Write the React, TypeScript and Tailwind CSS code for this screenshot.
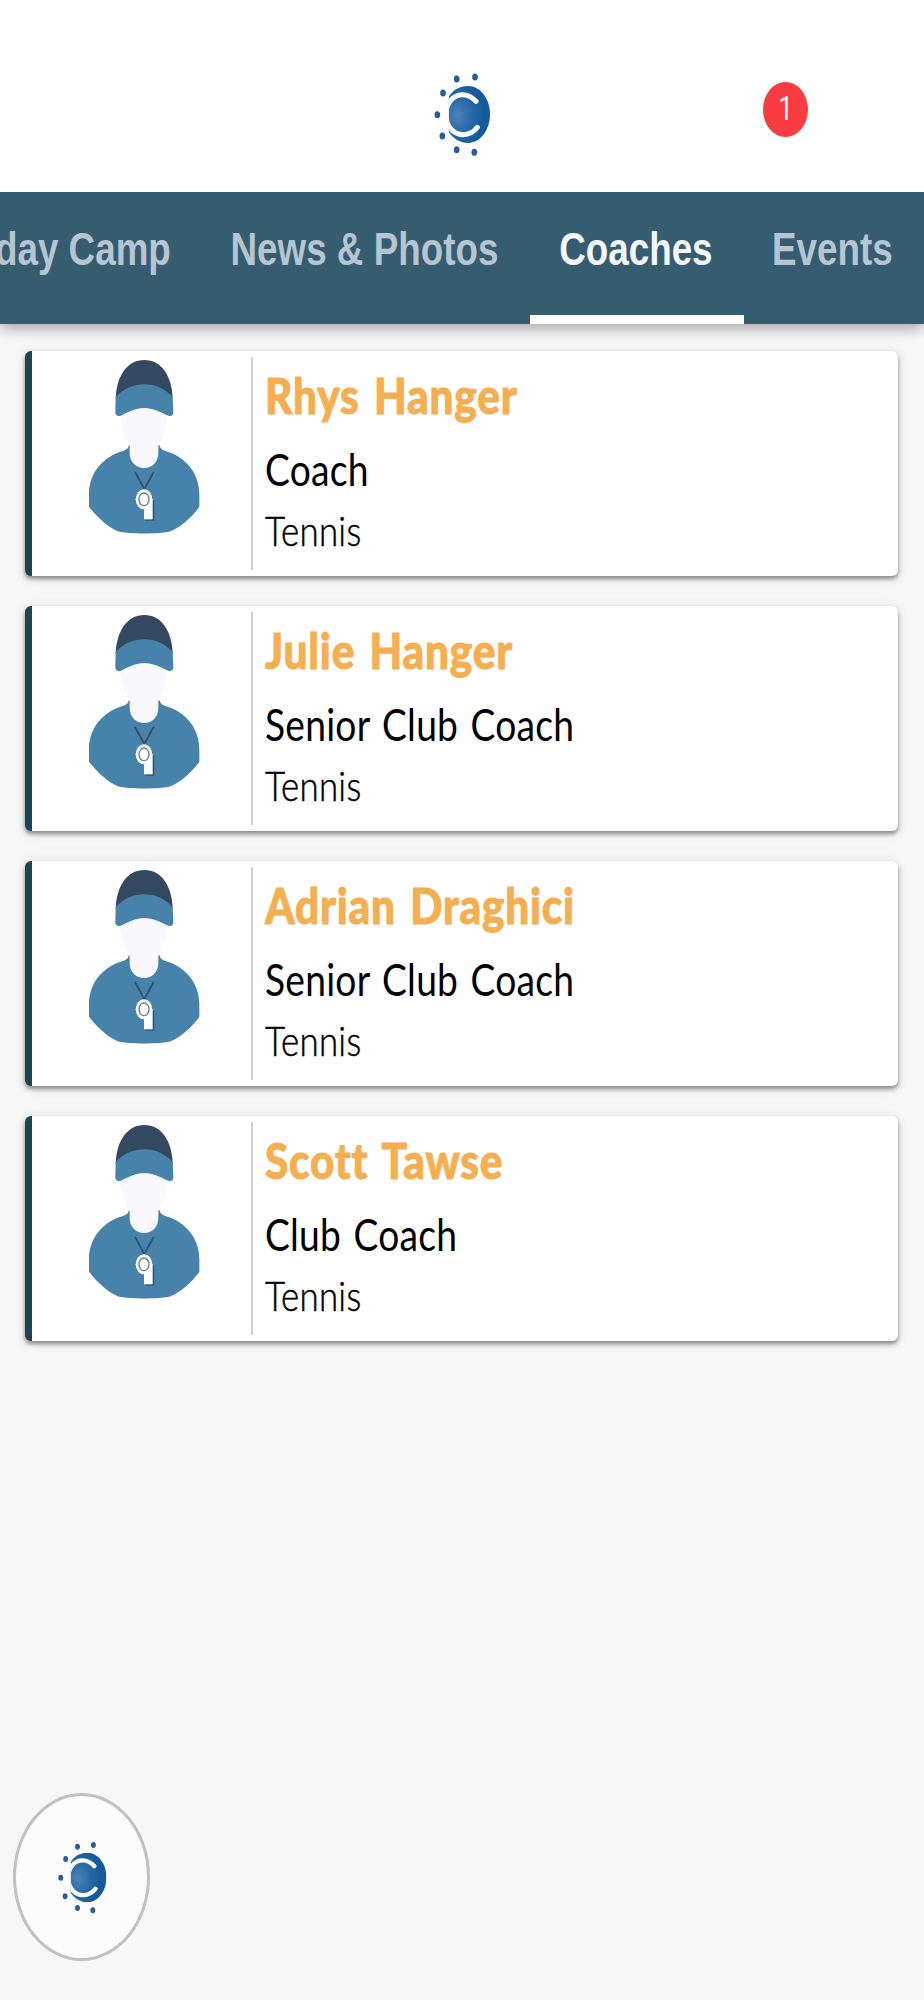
import { useState } from 'react'
import clsx from 'clsx'

const tabs = [
  { label: 'day Camp', box: 'w-[201px] justify-end pr-[30px]', text: 'origin-right' },
  { label: 'News & Photos', box: 'w-[329px] justify-center pr-0.5', text: 'origin-center' },
  { label: 'Coaches', box: 'w-[214px] justify-center pr-0.5', text: 'origin-center' },
  { label: 'Events', box: 'w-[180px] justify-start pl-7', text: 'origin-left' },
]

const coaches = [
  { name: 'Rhys Hanger', role: 'Coach', sport: 'Tennis' },
  { name: 'Julie Hanger', role: 'Senior Club Coach', sport: 'Tennis' },
  { name: 'Adrian Draghici', role: 'Senior Club Coach', sport: 'Tennis' },
  { name: 'Scott Tawse', role: 'Club Coach', sport: 'Tennis' },
]

const dots = [
  [171, 87], [226, 81], [130, 129], [113, 194], [128, 258], [171, 299], [224, 307],
]

function Logo({ id, className }: { id: string; className: string }) {
  return (
    <svg viewBox="100 60 180 270" preserveAspectRatio="none" className={className}>
      <defs>
        <radialGradient id={id} cx="0.24" cy="0.52" r="0.55">
          <stop offset="0" stopColor="#4a83b8" />
          <stop offset="0.6" stopColor="#2467a5" />
          <stop offset="1" stopColor="#155a9c" />
        </radialGradient>
        <clipPath id={`${id}-body`}>
          <path d="M147 141C158 121 180 108 205 108C242 108 271 146 271 193C271 240 242 279 205 279C182 279 162 267 147 246Z" />
        </clipPath>
      </defs>
      <g clipPath={`url(#${id}-body)`}>
        <rect x="140" y="100" width="140" height="185" fill={`url(#${id})`} />
        <path
          d="M229 154C216 139 203 134 188 134C160 134 139 160 139 194C139 228 160 254 190 254C208 254 222 247 233 232"
          fill="none"
          stroke="#fff"
          strokeWidth="15"
          strokeLinecap="round"
        />
      </g>
      {dots.map(([x, y]) => (
        <ellipse key={y} cx={x} cy={y} rx="8.5" ry="10.5" fill="#2c5a9d" />
      ))}
    </svg>
  )
}

function Avatar() {
  return (
    <svg viewBox="264 56 336 528" className="h-[176px] w-[112px]">
      {/* shirt */}
      <path
        d="M386 315C386 324 379 328 371 331C305 350 267 400 267 462V499C296 536 325 560 353 573C380 582 485 582 512 573C542 560 572 534 598 500V462C598 400 560 350 494 331C485 328 479 323 479 315Z"
        fill="#4682aa"
      />
      {/* face and neck */}
      <path
        d="M360 222C364 262 372 296 389 316V337C389 366 409 383 432 383C456 383 475 366 475 337V316C491 294 499 262 501 222L432 198Z"
        fill="#f9f9fd"
      />
      {/* cap */}
      <path d="M347 176C349 106 382 59 433 59C484 59 516 106 518 176Z" fill="#33495f" />
      <path
        d="M347 170C370 145 401 132 433 132C466 132 495 145 518 170L520 215C520 225 514 229 505 226C482 216 458 203 433 203C407 203 385 216 362 226C352 229 346 224 346 215Z"
        fill="#4682aa"
      />
      {/* whistle */}
      <path d="M405 395L433 446L461 395" fill="none" stroke="#31506a" strokeWidth="5" />
      <path d="M435 480H463V541H435Z" fill="#31597a" />
      <ellipse cx="432" cy="477" rx="25" ry="30" fill="#fdfdfd" />
      <path d="M432 477H458V537H432Z" fill="#fdfdfd" />
      <ellipse cx="432" cy="477" rx="15" ry="19" fill="#fdfdfd" stroke="#6b8193" strokeWidth="4" />
    </svg>
  )
}

export default function App() {
  const [active, setActive] = useState('Coaches')

  return (
    <div className="flex h-[2000px] w-[924px] flex-col overflow-hidden bg-[#f7f7f7] font-['Lato',sans-serif]">
      <header className="z-20 flex h-48 shrink-0 items-start bg-white">
        <Logo id="logo-top" className="mt-[70px] ml-[433px] h-[90px] w-[60px]" />
        <span className="mt-[82px] ml-[270px] flex h-[55px] w-[45px] items-center justify-center rounded-[50%] bg-[#f93c40] pb-1 font-['Roboto',sans-serif] text-[34px] leading-none text-white">
          <span className="scale-x-75">1</span>
        </span>
      </header>

      <nav className="z-10 flex h-[132px] shrink-0 bg-[#355c6f] font-['Liberation_Sans',sans-serif] shadow-[0_4px_14px_rgba(0,0,0,0.35)]">
        {tabs.map((t) => (
          <button
            key={t.label}
            onClick={() => setActive(t.label)}
            className={clsx(
              'flex shrink-0 items-start border-b-9 pt-[30px] text-[46px] leading-[54px] font-bold whitespace-nowrap',
              t.box,
              active === t.label ? 'border-white text-[#f4f8fd]' : 'border-transparent text-[#b5c5d1]'
            )}
          >
            <span className={clsx('shrink-0 scale-x-[0.8]', t.text)}>{t.label}</span>
          </button>
        ))}
      </nav>

      <main className="flex flex-col gap-[30px] pt-[27px] pr-[26px] pl-[25px]">
        {coaches.map((c) => (
          <article
            key={c.name}
            className="flex h-[225px] rounded-md border-l-7 border-[#1b4459] bg-white shadow-[0_3px_4px_rgba(0,0,0,0.4),0_2px_12px_rgba(0,0,0,0.12)]"
          >
            <div className="my-1.5 flex w-[221px] shrink-0 border-r-2 border-[#cfcfcf] pt-0.5 pl-14">
              <Avatar />
            </div>
            <div className="flex flex-col items-start pt-3.5 pl-3 whitespace-nowrap">
              <h2 className="origin-left scale-x-[0.865] text-[49px] leading-[60px] font-black tracking-[0.9px] text-[#f5ae50] [-webkit-text-stroke:0.9px_#f5ae50] [word-spacing:4px]">
                {c.name}
              </h2>
              <p className="mt-[18px] origin-left scale-x-[0.845] text-[44px] leading-[53px] tracking-[0.3px] text-black [word-spacing:3px]">
                {c.role}
              </p>
              <p className="mt-2.5 origin-left scale-x-[0.85] text-[41px] leading-[49px] font-light tracking-[0.3px] text-black [-webkit-text-stroke:0.5px_#000]">
                {c.sport}
              </p>
            </div>
          </article>
        ))}
      </main>

      <button className="mt-auto mb-[39px] ml-[13px] flex h-[168px] w-[137px] shrink-0 items-start rounded-[50%] border-3 border-[#c1c1c1] bg-[#fcfcfc] pt-[43px] pl-[41px]">
        <Logo id="logo-menu" className="h-[78px] w-[52px]" />
      </button>
    </div>
  )
}
